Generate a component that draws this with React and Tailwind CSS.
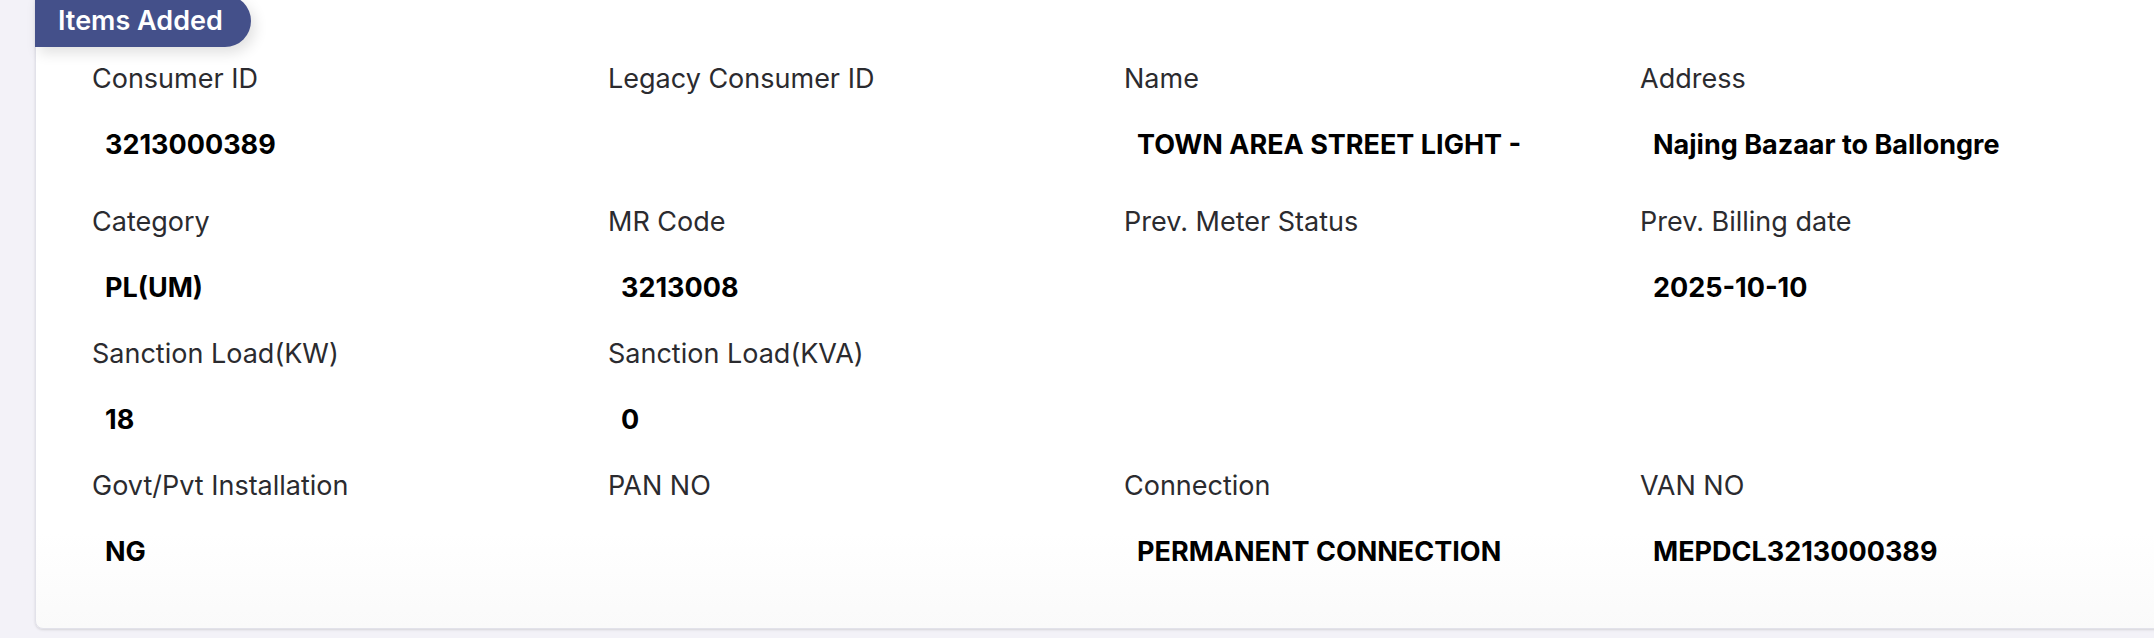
const rows = [
  [
    { label: "Consumer ID", value: "3213000389" },
    { label: "Legacy Consumer ID", value: "" },
    { label: "Name", value: "TOWN AREA STREET LIGHT -" },
    { label: "Address", value: "Najing Bazaar to Ballongre" },
  ],
  [
    { label: "Category", value: "PL(UM)" },
    { label: "MR Code", value: "3213008" },
    { label: "Prev. Meter Status", value: "" },
    { label: "Prev. Billing date", value: "2025-10-10" },
  ],
  [
    { label: "Sanction Load(KW)", value: "18" },
    { label: "Sanction Load(KVA)", value: "0" },
    null,
    null,
  ],
  [
    { label: "Govt/Pvt Installation", value: "NG" },
    { label: "PAN NO", value: "" },
    { label: "Connection", value: "PERMANENT CONNECTION" },
    { label: "VAN NO", value: "MEPDCL3213000389" },
  ],
];

const Field = ({ item }) => {
  if (!item) return <div />;
  return (
    <div className="flex flex-col">
      <span className="h-8 whitespace-nowrap text-[27px] leading-8 text-[#2b2b2f]">{item.label}</span>
      <span className="mt-[34px] ml-[13px] h-8 whitespace-nowrap text-[27px] leading-8 font-bold text-black">
        {item.value}
      </span>
    </div>
  );
};

const App = () => {
  return (
    <div
      className="h-[638px] w-full overflow-hidden bg-[#f3f2f8]"
      style={{ fontFamily: "Inter, 'Open Sans', sans-serif" }}
    >
      <div className="-mt-[10px] ml-[35px] w-[2220px] rounded-lg border border-[#e2e2ea] bg-gradient-to-b from-white from-85% to-[#fafafa] pb-[60px] shadow-sm">
        <div className="-ml-px mt-[4px] inline-flex h-[52px] items-center rounded-r-full bg-[#44508a] pl-[23px] pr-[28px] text-[27px] font-semibold text-white shadow-[4px_6px_14px_rgba(0,0,0,0.12)]">
          Items Added
        </div>
        <div className="mt-[16px] flex flex-col gap-[34px] pl-[56px]">
          {rows.map((row, i) => (
            <div
              key={i}
              className={`grid grid-cols-[repeat(4,516px)] ${i === 0 ? "pb-[11px]" : ""}`}
            >
              {row.map((item, j) => (
                <Field key={j} item={item} />
              ))}
            </div>
          ))}
        </div>
      </div>
    </div>
  );
};

export default App;
